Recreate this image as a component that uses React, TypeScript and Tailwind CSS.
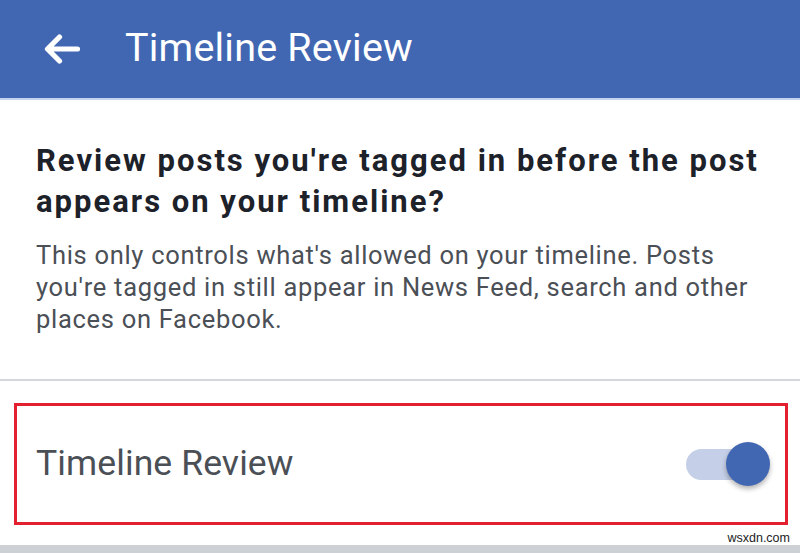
import React from "react";

export default function App() {
  return (
    <div
      className="relative w-[800px] h-[553px] overflow-hidden bg-white"
      style={{ fontFamily: "Roboto, 'Noto Sans', sans-serif" }}
    >
      <header className="h-[100px] bg-[#4267b2] border-b-2 border-[#c6d3ef] flex items-center">
        <div className="ml-[44px] w-[36px] h-[30px] flex items-center">
          <svg width="36" height="30" viewBox="0 0 36 30" fill="none">
            <path
              d="M33.5 15H4 M15.5 3L3.5 15L15.5 27"
              stroke="white"
              strokeWidth="5.2"
              strokeLinecap="round"
              strokeLinejoin="round"
            />
          </svg>
        </div>
        <h1 className="ml-[45px] -mt-[2px] text-white text-[39.5px] leading-none font-normal tracking-[0.2px]">
          Timeline Review
        </h1>
      </header>

      <section className="pl-[36px] pr-[10px] pt-[40px]">
        <h2 className="text-[31px] leading-[41px] font-bold text-[#1d2129] tracking-[2px] whitespace-nowrap">
          Review posts you're tagged in before the post
          <br />
          appears on your timeline?
        </h2>
        <p className="mt-[17px] text-[25.5px] leading-[32px] text-[#4b4f56] tracking-[0.7px] whitespace-nowrap">
          This only controls what's allowed on your timeline. Posts
          <br />
          you're tagged in still appear in News Feed, search and other
          <br />
          places on Facebook.
        </p>
      </section>

      <div className="mt-[44px] h-[2px] bg-[#d3d6db]" />

      <div className="mt-[22px] ml-[14px] w-[774px] h-[122px] border-[3px] border-[#e3202f] flex items-center justify-between pl-[19px] pr-[15px]">
        <span className="text-[35.5px] text-[#4b4f56] leading-none tracking-[0.1px]">Timeline Review</span>
        <div className="relative w-[84px] h-[44px] flex items-center">
          <div className="w-[64px] h-[31px] rounded-full bg-[#c5cfe7]" />
          <div className="absolute right-0 top-0 w-[44px] h-[44px] rounded-full bg-[#4267b2] shadow-[0_3px_5px_rgba(0,0,0,0.3)]" />
        </div>
      </div>

      <div className="absolute left-0 right-0 bottom-0 h-[8px] bg-[#cdd0d4]" />
      <div
        className="absolute right-[10px] bottom-[9px] text-[12.5px] leading-none text-[#222]"
        style={{ fontFamily: "'Liberation Sans', Arial, sans-serif" }}
      >
        wsxdn.com
      </div>
    </div>
  );
}
